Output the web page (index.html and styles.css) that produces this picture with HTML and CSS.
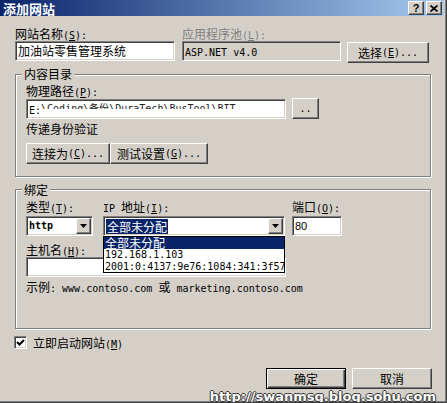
FILE: index.html
```html
<!DOCTYPE html>
<html lang="zh-CN">

<head>
    <meta charset="UTF-8">
    <title>添加网站</title>
    <link rel="stylesheet" href="styles.css">
</head>

<body>
    <div class="window">
        <div class="titlebar">
            <span class="title">添加网站</span>
            <div class="caption-btns">
                <span class="btn cap-btn help">?</span>
                <span class="btn cap-btn">
                    <svg width="8" height="7" viewBox="0 0 8 7"><path d="M0.5 0.5 L7.5 6.5 M7.5 0.5 L0.5 6.5" stroke="#000" stroke-width="1.7"/></svg>
                </span>
            </div>
        </div>

        <div class="client">
            <div class="top-row">
                <div class="name-col">
                    <div class="label">网站名称<span class="en">(<u>S</u>):</span></div>
                    <div class="textbox">加油站零售管理系统</div>
                </div>
                <div class="pool-col">
                    <div class="label disabled">应用程序池<span class="en">(<u>L</u>):</span></div>
                    <div class="textbox readonly"><span class="en">ASP.NET v4.0</span></div>
                </div>
                <div class="btn push select-btn">选择<span class="en">(<u>E</u>)...</span></div>
            </div>

            <div class="group content-group">
                <div class="legend">内容目录</div>
                <div class="label">物理路径<span class="en">(<u>P</u>):</span></div>
                <div class="path-row">
                    <div class="textbox path-box"><span class="en">E:</span><span class="smudge en">\Coding\备份\DuraTech\BusTool\BIT</span></div>
                    <div class="btn push browse-btn"><span class="en">..</span></div>
                </div>
                <div class="label pass-label">传递身份验证</div>
                <div class="btn-pair">
                    <div class="btn push connect-btn">连接为<span class="en">(<u>C</u>)...</span></div>
                    <div class="btn push test-btn">测试设置<span class="en">(<u>G</u>)...</span></div>
                </div>
            </div>

            <div class="group binding-group">
                <div class="legend">绑定</div>
                <div class="binding-row">
                    <div class="type-col">
                        <div class="label">类型<span class="en">(<u>T</u>):</span></div>
                        <div class="textbox combo">
                            <span class="en combo-text">http</span>
                            <span class="btn drop-btn"><svg width="7" height="4" viewBox="0 0 7 4"><path d="M0 0 H7 L3.5 4 Z" fill="#000"/></svg></span>
                        </div>
                    </div>
                    <div class="ip-col">
                        <div class="label"><span class="en">IP </span>地址<span class="en">(<u>I</u>):</span></div>
                        <div class="textbox combo open">
                            <span class="selected-text">全部未分配</span>
                            <span class="btn drop-btn"><svg width="7" height="4" viewBox="0 0 7 4"><path d="M0 0 H7 L3.5 4 Z" fill="#000"/></svg></span>
                            <div class="dropdown">
                                <div class="item active">全部未分配</div>
                                <div class="item en">192.168.1.103</div>
                                <div class="item en">2001:0:4137:9e76:1084:341:3f57</div>
                            </div>
                        </div>
                    </div>
                    <div class="port-col">
                        <div class="label">端口<span class="en">(<u>O</u>):</span></div>
                        <div class="textbox port-box">80</div>
                    </div>
                </div>
                <div class="label host-label">主机名<span class="en">(<u>H</u>):</span></div>
                <div class="textbox host-box"></div>
                <div class="label example">示例<span class="en">: www.contoso.com </span>或<span class="en"> marketing.contoso.com</span></div>
            </div>

            <div class="check-row">
                <span class="checkbox"><svg width="9" height="9" viewBox="0 0 9 9"><path d="M1 4 L3.5 6.5 L8 2" stroke="#000" stroke-width="2" fill="none"/></svg></span>
                <span class="check-label">立即启动网站<span class="en">(<u>M</u>)</span></span>
            </div>

            <div class="dialog-btns">
                <div class="btn push default">确定</div>
                <div class="btn push">取消</div>
            </div>
        </div>

        <div class="watermark">http://swanmsg.blog.sohu.com</div>
    </div>
</body>

</html>
```

FILE: styles.css
```css
* {
    box-sizing: border-box;
}

html,
body {
    margin: 0;
    padding: 0;
    background: #d4d0c8;
}

body {
    font: 12px/14px "Noto Sans CJK SC", sans-serif;
    color: #000;
}

.window {
    position: relative;
    width: 447px;
    height: 403px;
    padding: 0 2px 2px 0;
    background: #d4d0c8;
    border-right: 1px solid #404040;
    border-bottom: 1px solid #404040;
    box-shadow: inset -1px -1px #808080;
    overflow: hidden;
}

.en {
    font-family: "DejaVu Sans Mono", monospace;
    font-size: 10px;
    line-height: 10px;
}

/* title bar */

.titlebar {
    height: 16px;
    display: flex;
    align-items: center;
    justify-content: space-between;
    padding: 0 2px 0 3px;
    background: linear-gradient(to right, #0a246a, #a6caf0);
}

.title {
    color: #fff;
    font-weight: bold;
    font-size: 13px;
    line-height: 15px;
}

.caption-btns {
    display: flex;
    gap: 2px;
}

.btn {
    background: #d4d0c8;
    border: 1px solid;
    border-color: #fff #404040 #404040 #fff;
    box-shadow: inset -1px -1px #808080;
}

.cap-btn {
    width: 16px;
    height: 14px;
    display: flex;
    align-items: center;
    justify-content: center;
}

.help {
    font: bold 11px/12px "Liberation Sans", sans-serif;
}

/* body */

.client {
    padding: 11px 12px 0 15px;
}

.label {
    height: 14px;
    white-space: nowrap;
}

.textbox {
    height: 20px;
    padding: 0 2px;
    background: #fff;
    border: 1px solid;
    border-color: #808080 #fff #fff #808080;
    box-shadow: inset 1px 1px #404040, inset -1px -1px #d4d0c8;
    line-height: 18px;
    white-space: nowrap;
    overflow: hidden;
}

.readonly {
    background: #d4d0c8;
}

.disabled {
    color: #808080;
}

.push {
    height: 21px;
    display: flex;
    align-items: center;
    justify-content: center;
}

.top-row {
    display: flex;
    align-items: flex-start;
}

.name-col {
    width: 160px;
}

.pool-col {
    width: 159px;
    margin-left: 7px;
}

.select-btn {
    width: 82px;
    margin: 15px 0 0 6px;
}

/* group boxes */

.group {
    margin-right: 1px;
    border: 1px solid #808080;
    box-shadow: 1px 1px 0 #fff, inset 1px 1px 0 #fff;
    padding: 9px 10px 12px 10px;
}

.legend {
    width: fit-content;
    height: 14px;
    margin: -17px 0 3px -4px;
    padding: 0 2px;
    background: #d4d0c8;
}

.content-group {
    margin-top: 11px;
}

.path-row {
    display: flex;
    align-items: flex-start;
    margin-top: 1px;
}

.path-box {
    width: 260px;
}

.smudge {
    display: inline-block;
    height: 6px;
    overflow: hidden;
    vertical-align: top;
    margin-top: 3px;
    line-height: 12px;
    color: #222;
}

.browse-btn {
    width: 27px;
    margin: -1px 0 0 6px;
    align-items: flex-end;
    padding-bottom: 4px;
}

.pass-label {
    margin-top: 3px;
}

.btn-pair {
    display: flex;
    margin-top: 7px;
}

.connect-btn {
    width: 84px;
}

.test-btn {
    width: 98px;
}

.binding-group {
    margin-top: 12px;
    padding-top: 10px;
    padding-bottom: 34px;
}

.binding-row {
    display: flex;
}

.binding-row .label {
    margin-bottom: 2px;
}

.type-col {
    width: 67px;
}

.ip-col {
    width: 182px;
    margin-left: 10px;
}

.port-col {
    width: 50px;
    margin-left: 7px;
}

.combo {
    display: flex;
    align-items: center;
    justify-content: space-between;
    padding: 0 1px 0 2px;
}

.combo-text {
    font-weight: bold;
}

.drop-btn {
    width: 15px;
    height: 16px;
    display: flex;
    align-items: center;
    justify-content: center;
}

.open {
    position: relative;
    overflow: visible;
    z-index: 2;
}

.selected-text {
    background: #0a246a;
    color: #fff;
    padding: 0 1px;
    line-height: 15px;
}

.dropdown {
    position: absolute;
    left: -1px;
    top: 19px;
    width: 182px;
    height: 37px;
    background: #fff;
    border: 1px solid #000;
    overflow: hidden;
}

.item {
    height: 12px;
    line-height: 12px;
    padding-left: 1px;
    white-space: nowrap;
}

.item.active {
    background: #0a246a;
    color: #fff;
}

.port-box {
    font: 11px/18px "Liberation Sans", sans-serif;
}

.host-label {
    margin-top: 7px;
}

.host-box {
    width: 260px;
}

.example {
    margin-top: 3px;
}

/* bottom */

.check-row {
    display: flex;
    align-items: center;
    gap: 6px;
    height: 13px;
    margin: 7px 0 0 -1px;
    line-height: 13px;
}

.checkbox {
    width: 13px;
    height: 13px;
    display: flex;
    align-items: center;
    justify-content: center;
    background: #fff;
    border: 1px solid;
    border-color: #808080 #fff #fff #808080;
    box-shadow: inset 1px 1px #404040, inset -1px -1px #d4d0c8;
}

.check-label {
    white-space: nowrap;
}

.dialog-btns {
    display: flex;
    justify-content: flex-end;
    gap: 6px;
    margin-top: 19px;
}

.dialog-btns .btn {
    width: 80px;
}

.dialog-btns .default {
    border: 1px solid #000;
    box-shadow: inset 1px 1px #fff, inset -1px -1px #404040, inset -2px -2px #808080;
}

.watermark {
    position: absolute;
    right: 10px;
    bottom: -3px;
    color: #fff;
    font: bold 13px/17px "DejaVu Sans", sans-serif;
    text-shadow: -1px 0 #333, 1px 0 #333, 0 -1px #333, 0 1px #333;
}
```
